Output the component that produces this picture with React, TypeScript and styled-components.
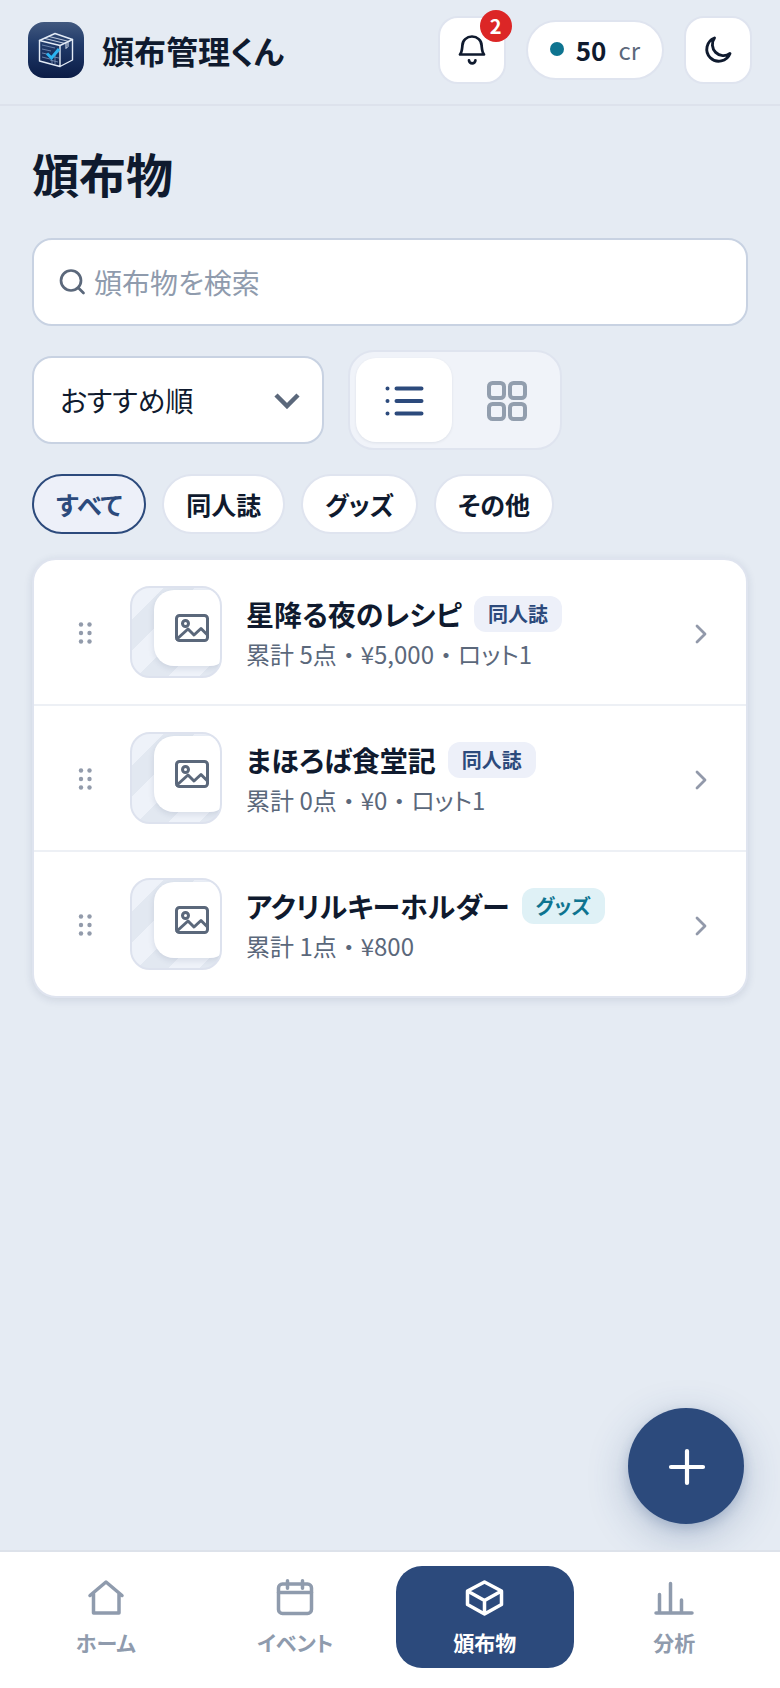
import React, { useState } from "react";
import styled, { createGlobalStyle, css } from "styled-components";

const Global = createGlobalStyle`
  *, *::before, *::after { box-sizing: border-box; }
  body {
    margin: 0;
    background: #e5ebf3;
    color: #0f1a2e;
    font-family: "Noto Sans CJK JP", sans-serif;
    font-feature-settings: "palt";
  }
  button, input, select { font: inherit; font-feature-settings: inherit; color: inherit; }
  button { padding: 0; border: 0; background: none; cursor: pointer; }
  h1, h2, p, ul { margin: 0; padding: 0; }
`;

const Page = styled.div`
  display: flex;
  flex-direction: column;
  min-height: 100vh;
`;

const Header = styled.header`
  display: flex;
  align-items: center;
  justify-content: space-between;
  padding: 16px 28px 20px;
  border-bottom: 2px solid #dde2ec;
`;

const Brand = styled.a`
  display: flex;
  align-items: center;
  gap: 18px;
  color: inherit;
  text-decoration: none;
  font-size: 32px;
  line-height: 48px;
  font-weight: 700;
`;

const HeaderTools = styled.div`
  display: flex;
  align-items: center;
  gap: 20px;
`;

const IconButton = styled.button`
  position: relative;
  display: flex;
  align-items: center;
  justify-content: center;
  width: 68px;
  height: 68px;
  border: 2px solid #dfe4ef;
  border-radius: 20px;
  background: #fff;
`;

const Count = styled.span`
  position: absolute;
  top: -8px;
  right: -8px;
  width: 32px;
  height: 32px;
  border-radius: 50%;
  background: #dc2626;
  color: #fff;
  font-size: 20px;
  line-height: 32px;
  font-weight: 700;
  text-align: center;
`;

const Credits = styled.button`
  display: flex;
  align-items: center;
  gap: 12px;
  height: 60px;
  padding: 0 22px 2px;
  border: 2px solid #dfe4ef;
  border-radius: 30px;
  background: #fff;
  font-size: 26px;
  font-weight: 700;
  small {
    color: #5b687b;
    font-size: 24px;
    font-weight: 400;
  }
`;

const Dot = styled.span`
  width: 14px;
  height: 14px;
  border-radius: 50%;
  background: #0e7490;
`;

const Main = styled.main`
  flex: 1;
  display: flex;
  flex-direction: column;
  gap: 24px;
  padding: 26px 32px;
`;

const Title = styled.h1`
  font-size: 47px;
  line-height: 82px;
  font-weight: 700;
`;

const SearchBox = styled.label`
  display: flex;
  align-items: center;
  gap: 8px;
  height: 88px;
  padding: 0 24px;
  border: 2px solid #c8d2e2;
  border-radius: 20px;
  background: #fff;
  color: #5b687b;
`;

const SearchInput = styled.input`
  flex: 1;
  min-width: 0;
  padding: 0;
  border: 0;
  outline: 0;
  background: none;
  color: #0f1a2e;
  font-size: 28px;
  &::placeholder { color: #8f9bad; opacity: 1; }
`;

const Controls = styled.div`
  display: flex;
  align-items: center;
  gap: 24px;
`;

const SelectWrap = styled.div`
  display: grid;
  align-items: center;
  width: 292px;
  > * { grid-area: 1 / 1; }
  > svg { justify-self: end; margin-right: 24px; color: #5b687b; pointer-events: none; }
`;

const Select = styled.select`
  appearance: none;
  width: 100%;
  height: 88px;
  padding: 0 60px 0 26px;
  border: 2px solid #c8d2e2;
  border-radius: 20px;
  background: #fff;
  font-size: 28px;
`;

const Segment = styled.div`
  display: flex;
  gap: 6px;
  padding: 6px;
  border: 2px solid #dfe4ef;
  border-radius: 26px;
  background: #f0f3f9;
`;

const SegmentButton = styled.button<{ $on: boolean }>`
  display: flex;
  align-items: center;
  justify-content: center;
  width: 96px;
  height: 84px;
  border-radius: 20px;
  color: #929eae;
  ${(p) => p.$on && css`
    background: #fff;
    color: #2c4a7c;
    box-shadow: 0 1px 3px rgba(15, 26, 46, 0.08);
  `}
`;

const Chips = styled.div`
  display: flex;
  gap: 16px;
`;

const Chip = styled.button<{ $on: boolean }>`
  height: 60px;
  padding: 0 22px;
  border: 2px solid ${(p) => (p.$on ? "#2c4a7c" : "#dfe4ef")};
  border-radius: 30px;
  background: ${(p) => (p.$on ? "#edf0f9" : "#fff")};
  color: ${(p) => (p.$on ? "#2c4a7c" : "#0f1a2e")};
  font-size: 25px;
  font-weight: 600;
`;

const List = styled.ul`
  list-style: none;
  border: 2px solid #dfe4ef;
  border-radius: 24px;
  background: #fff;
  box-shadow: 0 2px 8px rgba(30, 50, 90, 0.12);
`;

const Row = styled.li`
  display: flex;
  align-items: center;
  gap: 24px;
  padding: 26px 38px 26px 24px;
  & + & { border-top: 2px solid #edf0f5; }
`;

const Handle = styled.button`
  display: flex;
  justify-content: center;
  width: 54px;
  margin-right: -6px;
  color: #929bab;
  cursor: grab;
`;

const Thumb = styled.div`
  flex: none;
  width: 92px;
  height: 92px;
  padding: 2px 0 0 22px;
  border: 2px solid #dde2ee;
  border-radius: 20px;
  overflow: hidden;
  background: repeating-linear-gradient(135deg, #eef2f9 0 22px, #e2e8f1 22px 44px);
`;

const ThumbSheet = styled.div`
  display: flex;
  align-items: center;
  justify-content: center;
  width: 76px;
  height: 76px;
  border-radius: 20px;
  background: #fff;
  color: #5b687b;
  box-shadow: 0 2px 6px rgba(30, 50, 90, 0.12);
`;

const RowText = styled.div`
  flex: 1;
  min-width: 0;
  padding-top: 3px;
`;

const NameLine = styled.div`
  display: flex;
  align-items: center;
  gap: 12px;
`;

const Name = styled.h2`
  font-size: 28px;
  line-height: 40px;
  font-weight: 600;
`;

const Tag = styled.span<{ $tone: "navy" | "teal" }>`
  padding: 0 14px;
  border-radius: 12px;
  background: ${(p) => (p.$tone === "navy" ? "#edf0f9" : "#dff1f6")};
  color: ${(p) => (p.$tone === "navy" ? "#2c4a7c" : "#0e7490")};
  font-size: 20px;
  line-height: 36px;
  font-weight: 600;
`;

const Meta = styled.p`
  color: #5b687b;
  font-size: 24px;
  line-height: 40px;
`;

/* The middle dot keeps its full-width cell between two facts. */
const MiddleDot = styled.span`
  font-feature-settings: normal;
`;

const Dock = styled.div`
  position: sticky;
  bottom: 0;
`;

const Fab = styled.button`
  position: absolute;
  right: 36px;
  bottom: 164px;
  display: flex;
  align-items: center;
  justify-content: center;
  width: 116px;
  height: 116px;
  border-radius: 50%;
  background: #2c4a7c;
  color: #fff;
  box-shadow: 0 12px 40px rgba(44, 74, 124, 0.28), 0 4px 12px rgba(44, 74, 124, 0.2);
`;

const Nav = styled.nav`
  position: relative;
  display: grid;
  grid-template-columns: repeat(4, 1fr);
  gap: 12px;
  padding: 14px 17px 20px;
  border-top: 2px solid #dde2ea;
  background: #fff;
`;

const NavItem = styled.a<{ $on?: boolean }>`
  display: flex;
  flex-direction: column;
  align-items: center;
  gap: 8px;
  padding: 12px 0 10px;
  border-radius: 26px;
  background: ${(p) => (p.$on ? "#2c4a7c" : "none")};
  color: ${(p) => (p.$on ? "#fff" : "#8f9bad")};
  font-size: 21px;
  line-height: 32px;
  font-weight: 600;
  text-decoration: none;
`;

const Line = ({ size, w = 2, children }: { size: number; w?: number; children: React.ReactNode }) => (
  <svg width={size} height={size} viewBox={`0 0 ${size} ${size}`} fill="none" stroke="currentColor"
    strokeWidth={w} strokeLinecap="round" strokeLinejoin="round" aria-hidden="true">
    {children}
  </svg>
);

const Logo = () => (
  <svg width="56" height="56" viewBox="0 0 56 56" fill="none" aria-hidden="true">
    <defs>
      <linearGradient id="logo-bg" x1="0" y1="0" x2="0" y2="1">
        <stop offset="0" stopColor="#42597f" />
        <stop offset="0.4" stopColor="#203a69" />
        <stop offset="1" stopColor="#0b1c46" />
      </linearGradient>
    </defs>
    <rect width="56" height="56" rx="16" fill="url(#logo-bg)" />
    <g stroke="#e3ebf6" strokeWidth="1.4" strokeLinejoin="round" strokeLinecap="round">
      <path d="M11.500 18.500 27 11.500 44.500 17.500 32 23.500Z" />
      <path d="M11.500 18.500V39L32 44.500V23.500M32 44.500 44.500 38V17.500" />
      <path d="M38 20.500v6l2-2V19.500" strokeWidth="1" />
      <path d="M17 16.500l20 5M21 14.500l20 5" strokeWidth="0.800" />
    </g>
    <g stroke="#7f95bb" strokeWidth="0.800">
      <path d="M14 23l13 3M14 27l9 2M14 31l5 1M14 35l8 2M24 38v4M27 33v9M22 38l8 2M26 35l5 1M28 29l3 1" />
    </g>
    <path d="M19 31.500 23.500 36 31 27" stroke="#2bb4f2" strokeWidth="3" />
  </svg>
);

const BellIcon = () => (
  <Line size={32} w={2.7}>
    <path d="M4 20.500H28C26 18.500 26 15 25.600 11.500A9.600 9 0 0 0 6.400 11.500C6 15 6 18.500 4 20.500Z" />
    <path d="M13 26.300a3.200 3 0 0 0 6.400 0" />
  </Line>
);

const items = [
  { name: "星降る夜のレシピ", tag: "同人誌", tone: "navy", facts: ["累計 5点", "¥5,000", "ロット1"] },
  { name: "まほろば食堂記", tag: "同人誌", tone: "navy", facts: ["累計 0点", "¥0", "ロット1"] },
  { name: "アクリルキーホルダー", tag: "グッズ", tone: "teal", facts: ["累計 1点", "¥800"] },
] as const;

const filters = ["すべて", "同人誌", "グッズ", "その他"];

export default function App() {
  const [filter, setFilter] = useState("すべて");
  const [view, setView] = useState("list");
  return (
    <Page lang="ja">
      <Global />
      <Header>
        <Brand href="#"><Logo />頒布管理くん</Brand>
        <HeaderTools>
          <IconButton aria-label="通知"><BellIcon /><Count>2</Count></IconButton>
          <Credits><Dot /><span>50</span><small>cr</small></Credits>
          <IconButton aria-label="テーマ切替">
            <Line size={32} w={2.9}>
              <path d="M12.500 4A12 12 0 1 0 28 19.500A11.100 11.100 0 0 1 12.500 4Z" />
            </Line>
          </IconButton>
        </HeaderTools>
      </Header>
      <Main>
        <Title>頒布物</Title>
        <SearchBox>
          <Line size={28} w={2.7}><circle cx="13" cy="12.500" r="10" /><path d="M20.500 20l5 5" /></Line>
          <SearchInput type="search" placeholder="頒布物を検索" aria-label="頒布物を検索" />
        </SearchBox>
        <Controls>
          <SelectWrap>
            <Select aria-label="並び順"><option>おすすめ順</option></Select>
            <svg width="26" height="18" viewBox="0 0 26 18" fill="none" stroke="currentColor" strokeWidth="4.500" aria-hidden="true">
              <path d="M2 4l11 11L24 4" />
            </svg>
          </SelectWrap>
          <Segment role="group" aria-label="表示形式">
            <SegmentButton $on={view === "list"} aria-label="リスト" onClick={() => setView("list")}>
              <Line size={40} w={4}>
                <path d="M12.500 8.500h25M12.500 21h25M12.500 33.500h25M3.500 8.500h.01M3.500 21h.01M3.500 33.500h.01" />
              </Line>
            </SegmentButton>
            <SegmentButton $on={view === "grid"} aria-label="グリッド" onClick={() => setView("grid")}>
              <Line size={42} w={4}>
                <rect x="4" y="4" width="15" height="15" rx="3.500" /><rect x="25" y="4" width="15" height="15" rx="3.500" />
                <rect x="4" y="25" width="15" height="15" rx="3.500" /><rect x="25" y="25" width="15" height="15" rx="3.500" />
              </Line>
            </SegmentButton>
          </Segment>
        </Controls>
        <Chips>
          {filters.map((f) => (
            <Chip key={f} $on={f === filter} onClick={() => setFilter(f)}>{f}</Chip>
          ))}
        </Chips>
        <List>
          {items.map((it) => (
            <Row key={it.name}>
              <Handle aria-label="並べ替え">
                <svg width="14" height="24" viewBox="0 0 14 24" fill="currentColor" aria-hidden="true">
                  {[4.5, 13, 21.5].map((y) => <g key={y}><circle cx="3" cy={y} r="2.200" /><circle cx="11.500" cy={y} r="2.200" /></g>)}
                </svg>
              </Handle>
              <Thumb>
                <ThumbSheet>
                  <Line size={36} w={3}>
                    <rect x="2.500" y="5.500" width="31" height="25" rx="3" />
                    <circle cx="11.500" cy="13.500" r="3" />
                    <path d="M3 29l11-10 6 6 7-6.500 6 6" />
                  </Line>
                </ThumbSheet>
              </Thumb>
              <RowText>
                <NameLine><Name>{it.name}</Name><Tag $tone={it.tone}>{it.tag}</Tag></NameLine>
                <Meta>
                  {it.facts.map((fact, i) => (
                    <React.Fragment key={fact}>{i > 0 && <MiddleDot>・</MiddleDot>}{fact}</React.Fragment>
                  ))}
                </Meta>
              </RowText>
              <svg width="14" height="26" viewBox="0 0 14 26" fill="none" stroke="#9299aa" strokeWidth="2.800" strokeLinecap="round" strokeLinejoin="round" aria-hidden="true">
                <path d="M3 7l8 8-8 8" />
              </svg>
            </Row>
          ))}
        </List>
      </Main>
      <Dock>
        <Fab aria-label="追加"><Line size={42} w={4.2}><path d="M22 6v32M6 22h32" /></Line></Fab>
        <Nav>
          <NavItem href="#home">
            <Line size={40} w={3.5}><path d="M4 17.500 20 4l16 13.500M7.500 15.500V35h25.500V15.500" /></Line>ホーム
          </NavItem>
          <NavItem href="#events">
            <Line size={40} w={3.5}><rect x="3.500" y="6" width="33" height="29.500" rx="4" /><path d="M3.500 14.500h33M12.500 2.700v7.600M27.500 2.700v7.600" /></Line>イベント
          </NavItem>
          <NavItem href="#items" $on aria-current="page">
            <Line size={40} w={3.5}><path d="M19.500 4l17 9v13.500l-17 9.500-17-9.500V13ZM2.500 13l17 9.500 17-9.500M19.500 22.500V36" /></Line>頒布物
          </NavItem>
          <NavItem href="#stats">
            <Line size={40} w={3.5}><path d="M2 35h36M5.500 35V16.500M16.500 35V5.500M27.500 35V22" /></Line>分析
          </NavItem>
        </Nav>
      </Dock>
    </Page>
  );
}
